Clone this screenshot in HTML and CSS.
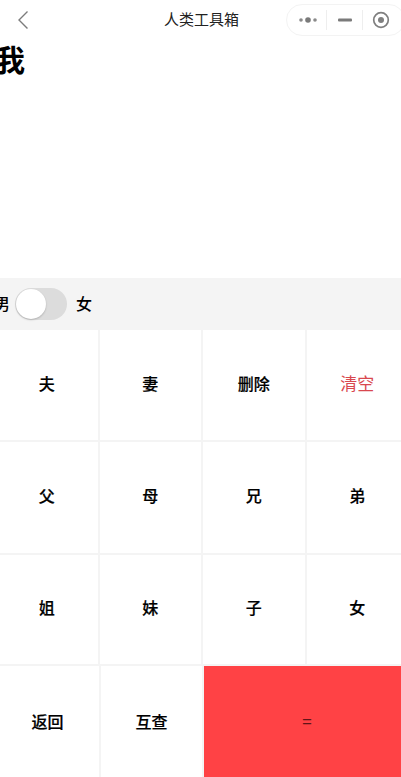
FILE: index.html
```html
<!DOCTYPE html>
<html lang="zh-CN">

<head>
    <meta charset="UTF-8">
    <meta name="viewport" content="width=device-width, initial-scale=1.0">
    <title>人类工具箱</title>
    <link rel="stylesheet" href="styles.css">
</head>

<body>
    <div class="nav">
        <svg class="nav-back" width="12" height="20" viewBox="0 0 12 20">
            <path d="M10.5 1.5 L2 10 L10.5 18.5" fill="none" stroke="#7c7c7c" stroke-width="1.4" />
        </svg>
        <div class="nav-title">人类工具箱</div>
        <div class="capsule">
            <div class="capsule-part">
                <svg width="18" height="8" viewBox="0 0 18 8">
                    <circle cx="2" cy="4" r="1.8" fill="#8a8a8a" />
                    <circle cx="9" cy="4" r="2.8" fill="#7a7a7a" />
                    <circle cx="16" cy="4" r="1.8" fill="#8a8a8a" />
                </svg>
            </div>
            <div class="capsule-part capsule-mid">
                <svg width="16" height="4" viewBox="0 0 16 4">
                    <rect x="1" y="0.5" width="14" height="3" rx="1" fill="#7a7a7a" />
                </svg>
            </div>
            <div class="capsule-part capsule-last">
                <svg width="18" height="18" viewBox="0 0 18 18">
                    <circle cx="9" cy="9" r="7.3" fill="none" stroke="#7f7f7f" stroke-width="1.7" />
                    <circle cx="9" cy="9" r="3" fill="#7f7f7f" />
                </svg>
            </div>
        </div>
    </div>

    <div class="screen">
        <div class="result">我</div>

        <div class="gender-bar">
            <span class="gender-male">男</span>
            <div class="switch">
                <div class="switch-knob"></div>
            </div>
            <span>女</span>
        </div>

        <div class="keys">
            <div class="key">夫</div>
            <div class="key">妻</div>
            <div class="key">删除</div>
            <div class="key key-clear">清空</div>
            <div class="key">父</div>
            <div class="key">母</div>
            <div class="key">兄</div>
            <div class="key">弟</div>
            <div class="key">姐</div>
            <div class="key">妹</div>
            <div class="key">子</div>
            <div class="key">女</div>
        </div>

        <div class="keys-bottom">
            <div class="key">返回</div>
            <div class="key">互查</div>
            <div class="key key-equal">=</div>
        </div>
    </div>
</body>
</html>
```

FILE: styles.css
```css
* {
    box-sizing: border-box;
}

html,
body {
    margin: 0;
    height: 100%;
    overflow: hidden;
    background-color: #fff;
}

body {
    font-family: "Noto Sans CJK SC", "Liberation Sans", sans-serif;
    color: #000;
}

.nav {
    display: flex;
    align-items: center;
    justify-content: space-between;
    height: 40px;
    padding-left: 17px;
    margin-right: -4px;
    position: relative;
}

.nav-title {
    position: absolute;
    left: 1px;
    top: 8px;
    width: 401px;
    text-align: center;
    font-size: 15px;
    line-height: 22px;
    color: #222;
}

.capsule {
    display: flex;
    align-items: center;
    width: 119px;
    height: 32px;
    padding-left: 2px;
    border: 1px solid #f3f3f3;
    border-radius: 16px;
}

.capsule-part {
    display: flex;
    align-items: center;
    justify-content: center;
    width: 37px;
    height: 20px;
}

.capsule-mid {
    border-left: 1px solid #eeeeee;
    border-right: 1px solid #eeeeee;
}

.capsule-last {
    padding-right: 2px;
}

.screen {
    width: 414px;
    margin-left: -4px;
}

.result {
    height: 238px;
    font-size: 30px;
    font-weight: 700;
    line-height: 36px;
    margin-left: -1px;
}

.gender-bar {
    display: flex;
    align-items: center;
    height: 52px;
    background-color: #f4f4f4;
    font-size: 16px;
    font-weight: 500;
    line-height: 22px;
}

.gender-bar span {
    margin-top: -3px;
}

.gender-male {
    margin-left: -2px;
}

.switch {
    width: 52px;
    height: 32px;
    margin: 0 9px 0 5px;
    border-radius: 16px;
    background-color: #dcdcdc;
    padding: 1px;
}

.switch-knob {
    width: 30px;
    height: 30px;
    border-radius: 50%;
    background-color: #fff;
    box-shadow: 0 1px 2px rgba(0, 0, 0, 0.2);
}

.keys {
    display: grid;
    grid-template-columns: repeat(4, 103.5px);
    grid-template-rows: 112px 113px 111px;
}

.keys-bottom {
    display: grid;
    grid-template-columns: 105px 103px 206px;
    height: 112px;
}

.key {
    display: flex;
    align-items: center;
    justify-content: center;
    padding-bottom: 5px;
    font-size: 16px;
    font-weight: 500;
    -webkit-text-stroke: 0.2px #000;
    border-right: 2px solid #f4f4f4;
    border-bottom: 2px solid #f4f4f4;
}

.keys-bottom .key {
    border-bottom: 0;
    padding-bottom: 3px;
}

.key-clear {
    color: #d9484f;
    font-size: 17px;
    font-weight: 400;
    -webkit-text-stroke: 0;
}

.keys-bottom .key-equal {
    background-color: #ff4245;
    border: 0;
    color: #601418;
    font-size: 17px;
    font-weight: 400;
    -webkit-text-stroke: 0;
}
```
